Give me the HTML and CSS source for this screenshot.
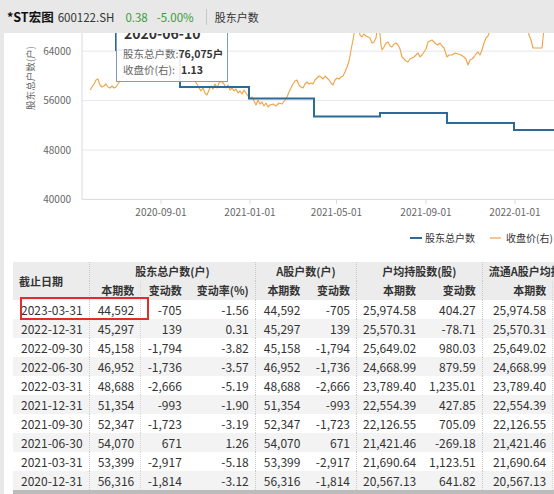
FILE: index.html
```html
<!DOCTYPE html>
<html lang="zh">
<head>
<meta charset="utf-8">
<title>股东户数</title>
<link rel="stylesheet" href="styles.css">
</head>
<body>
<div class="page">
  <header class="topbar">
    <span class="name">*ST宏图</span>
    <span class="code">600122.SH</span>
    <span class="price up">0.38</span>
    <span class="pct up">-5.00%</span>
    <span class="sep"></span>
    <span class="tab">股东户数</span>
  </header>
  <div class="main">
    <div class="strip"></div>
    <div class="content">
      <div class="chart">
        <svg class="plot" width="550" height="229" viewBox="4 33 550 229" xmlns="http://www.w3.org/2000/svg">
          <g class="grid">
            <line x1="82" y1="51.2" x2="554" y2="51.2"/>
            <line x1="82" y1="100.6" x2="554" y2="100.6"/>
            <line x1="82" y1="150" x2="554" y2="150"/>
          </g>
          <g class="axis">
            <line x1="82" y1="20" x2="82" y2="199.4"/>
            <line x1="82" y1="199.4" x2="554" y2="199.4"/>
            <line x1="161" y1="199.4" x2="161" y2="204"/>
            <line x1="250" y1="199.4" x2="250" y2="204"/>
            <line x1="336.5" y1="199.4" x2="336.5" y2="204"/>
            <line x1="426" y1="199.4" x2="426" y2="204"/>
            <line x1="515" y1="199.4" x2="515" y2="204"/>
          </g>
          <g class="ylabels">
            <text x="71" y="54.7">64000</text>
            <text x="71" y="104.1">56000</text>
            <text x="71" y="153.5">48000</text>
            <text x="71" y="202.9">40000</text>
          </g>
          <text class="ytitle" transform="translate(33.5 78) rotate(-90)">股东总户数(户)</text>
          <g class="xlabels">
            <text x="161" y="215.5">2020-09-01</text>
            <text x="250" y="215.5">2021-01-01</text>
            <text x="336.5" y="215.5">2021-05-01</text>
            <text x="426" y="215.5">2021-09-01</text>
            <text x="515" y="215.5">2022-01-01</text>
          </g>
          <path class="price-line" d="M90,90 L92,87 L94,84 L96,80 L98,79 L100,85 L102,87 L104,86 L106,84 L108,87 L110,88 L112,86 L114,88 L116,87 L118,84 L120,81 L123,76 L127,73 L131,75 L135,70 L140,72 L145,68 L150,71 L155,66 L160,69 L165,64 L170,68 L175,66 L180,71 L185,74 L190,78 L194,80 L197,84 L199,88 L201,91 L203,88 L205,93 L207,95 L209,90 L211,86 L213,89 L215,84 L217,88 L219,83 L221,81 L224,84 L226,88 L228,85 L230,90 L232,88 L234,91 L236,89 L238,93 L240,91 L242,94 L244,90 L246,93 L248,96 L250,99 L252,97 L254,101 L256,105 L258,100 L260,104 L262,102 L264,106 L266,103 L268,107 L270,105 L273,104 L276,106 L279,103 L282,104 L285,100 L287,97 L289,92 L291,88 L293,84 L295,81 L297,80 L299,85 L301,87 L303,88 L305,84 L307,82 L309,84 L311,83 L313,84 L315,80 L317,78 L319,76 L321,77 L323,79 L325,76 L327,78 L329,80 L331,83 L333,85 L335,80 L337,78 L339,79 L341,77 L343,76 L345,72 L347,67 L349,61 L350,56 L351,50 L352,45 L353,40 L354,34 L356,20 L358,25 L360,35 L362,37 L364,34 L366,36 L368,37 L370,38 L372,43 L374,42 L376,38 L377,30 L379,25 L380,34 L381,45 L382,50 L384,47 L386,43 L388,42 L390,46 L392,47 L394,44 L396,43 L398,45 L400,49 L402,57 L404,59 L406,61 L408,62 L410,59 L412,58 L414,57 L416,55 L418,53 L420,57 L422,55 L424,52 L426,49 L428,42 L430,41 L432,40 L434,42 L436,44 L438,45 L440,43 L442,46 L444,48 L445,51 L447,57 L449,55 L452,55 L455,53 L458,54 L461,55 L464,57 L466,59 L467,62 L468,65 L470,60 L472,59 L474,57 L476,54 L478,52 L480,55 L482,50 L484,43 L486,38 L488,36 L489,33 L490,25 L492,15 L526,15 L528,30 L529,35 L531,40 L532,44 L533,48 L536,48 L539,48 L542,48 L543,38 L545,20 L554,15"/>
          <path class="holder-line" d="M116,15 L116,50 L180,50 L180,87 L249,87 L249,98.5 L314,98.5 L314,116.5 L380,116.5 L380,113 L447,113 L447,123 L514,123 L514,130 L554,130"/>
          <g class="legend">
            <line class="lg-blue" x1="410" y1="238" x2="422" y2="238"/>
            <text x="425" y="241.5">股东总户数</text>
            <line class="lg-orange" x1="490" y1="238" x2="501" y2="238"/>
            <text x="506" y="241.5">收盘价(右)</text>
          </g>
        </svg>
        <div class="tooltip">
          <div class="tt-title">2020-06-10</div>
          <div class="tt-row"><span class="tt-label">股东总户数:</span><span class="tt-val">76,075户</span></div>
          <div class="tt-row"><span class="tt-label">收盘价(右):</span><span class="tt-val">1.13</span></div>
        </div>
      </div>
      <div class="table-wrap">
        <table class="data">
          <colgroup>
            <col class="c-date">
            <col class="c-w50">
            <col class="c-w46">
            <col class="c-w66">
            <col class="c-w50">
            <col class="c-w49">
            <col class="c-w64">
            <col class="c-w59">
            <col class="c-w69">
            <col class="c-last">
          </colgroup>
          <thead>
            <tr>
              <th class="date-h" rowspan="2">截止日期</th>
              <th class="grp" colspan="3">股东总户数(户)</th>
              <th class="grp" colspan="2">A股户数(户)</th>
              <th class="grp" colspan="2">户均持股数(股)</th>
              <th class="grp" colspan="2">流通A股户均持股数(股)</th>
            </tr>
            <tr>
              <th class="sub gs">本期数</th>
              <th class="sub ds">变动数</th>
              <th class="sub">变动率(%)</th>
              <th class="sub gs">本期数</th>
              <th class="sub">变动数</th>
              <th class="sub gs">本期数</th>
              <th class="sub">变动数</th>
              <th class="sub gs">本期数</th>
              <th class="sub ds"></th>
            </tr>
          </thead>
          <tbody>
            <tr><td class="date">2023-03-31</td><td class="gs">44,592</td><td class="ds">-705</td><td>-1.56</td><td class="gs">44,592</td><td>-705</td><td class="gs">25,974.58</td><td>404.27</td><td class="gs">25,974.58</td><td class="ds"></td></tr>
            <tr><td class="date">2022-12-31</td><td class="gs">45,297</td><td class="ds">139</td><td>0.31</td><td class="gs">45,297</td><td>139</td><td class="gs">25,570.31</td><td>-78.71</td><td class="gs">25,570.31</td><td class="ds"></td></tr>
            <tr><td class="date">2022-09-30</td><td class="gs">45,158</td><td class="ds">-1,794</td><td>-3.82</td><td class="gs">45,158</td><td>-1,794</td><td class="gs">25,649.02</td><td>980.03</td><td class="gs">25,649.02</td><td class="ds"></td></tr>
            <tr><td class="date">2022-06-30</td><td class="gs">46,952</td><td class="ds">-1,736</td><td>-3.57</td><td class="gs">46,952</td><td>-1,736</td><td class="gs">24,668.99</td><td>879.59</td><td class="gs">24,668.99</td><td class="ds"></td></tr>
            <tr><td class="date">2022-03-31</td><td class="gs">48,688</td><td class="ds">-2,666</td><td>-5.19</td><td class="gs">48,688</td><td>-2,666</td><td class="gs">23,789.40</td><td>1,235.01</td><td class="gs">23,789.40</td><td class="ds"><span class="peek"></span></td></tr>
            <tr><td class="date">2021-12-31</td><td class="gs">51,354</td><td class="ds">-993</td><td>-1.90</td><td class="gs">51,354</td><td>-993</td><td class="gs">22,554.39</td><td>427.85</td><td class="gs">22,554.39</td><td class="ds"></td></tr>
            <tr><td class="date">2021-09-30</td><td class="gs">52,347</td><td class="ds">-1,723</td><td>-3.19</td><td class="gs">52,347</td><td>-1,723</td><td class="gs">22,126.55</td><td>705.09</td><td class="gs">22,126.55</td><td class="ds"></td></tr>
            <tr><td class="date">2021-06-30</td><td class="gs">54,070</td><td class="ds">671</td><td>1.26</td><td class="gs">54,070</td><td>671</td><td class="gs">21,421.46</td><td>-269.18</td><td class="gs">21,421.46</td><td class="ds"></td></tr>
            <tr><td class="date">2021-03-31</td><td class="gs">53,399</td><td class="ds">-2,917</td><td>-5.18</td><td class="gs">53,399</td><td>-2,917</td><td class="gs">21,690.64</td><td>1,123.51</td><td class="gs">21,690.64</td><td class="ds"><span class="peek"></span></td></tr>
            <tr><td class="date">2020-12-31</td><td class="gs">56,316</td><td class="ds">-1,814</td><td>-3.12</td><td class="gs">56,316</td><td>-1,814</td><td class="gs">20,567.13</td><td>641.82</td><td class="gs">20,567.13</td><td class="ds"></td></tr>
          </tbody>
        </table>
        <div class="mark"></div>
      </div>
      <div class="hscroll"></div>
    </div>
  </div>
</div>
</body>
</html>
```

FILE: styles.css
```css
html, body {
  margin: 0;
  padding: 0;
}

body {
  width: 554px;
  height: 494px;
  overflow: hidden;
  background: #ffffff;
  color: #333333;
  font-family: "Noto Sans CJK SC", "Noto Sans", sans-serif;
}

.page {
  display: flex;
  flex-direction: column;
  height: 494px;
}

/* ---------- top bar ---------- */
.topbar {
  position: relative;
  z-index: 2;
  flex: none;
  height: 33px;
  display: flex;
  align-items: center;
  padding-left: 7px;
  background: #e8e8e8;
  font-size: 11.5px;
  color: #333333;
}

.name {
  font-size: 12.5px;
  font-weight: 700;
  color: #111111;
}

.code {
  margin-left: 4px;
}

.up {
  color: #3b9a3e;
}

.price {
  margin-left: 11px;
}

.pct {
  margin-left: 9px;
}

.sep {
  width: 1px;
  height: 16px;
  margin-left: 12px;
  background: #c6c6c6;
}

.tab {
  margin-left: 8px;
  font-size: 11px;
}

/* ---------- main area ---------- */
.main {
  flex: 1;
  display: flex;
  min-height: 0;
}

.strip {
  flex: none;
  width: 4px;
  background: #e8e8e8;
}

.content {
  flex: 1;
  min-width: 0;
  display: flex;
  flex-direction: column;
  overflow: hidden;
  background: #ffffff;
}

/* ---------- chart ---------- */
.chart {
  position: relative;
  flex: none;
  height: 229px;
  overflow: hidden;
}

.plot {
  display: block;
}

.grid line {
  stroke: #e6e6ee;
  stroke-width: 1;
}

.axis line {
  stroke: #d9d9e3;
  stroke-width: 1;
}

.ylabels text {
  font-size: 10px;
  fill: #666666;
  text-anchor: end;
}

.ytitle {
  font-size: 9.6px;
  fill: #666666;
  text-anchor: middle;
}

.xlabels text {
  font-size: 10px;
  fill: #666666;
  text-anchor: middle;
}

.price-line {
  fill: none;
  stroke: #f1a244;
  stroke-width: 1.1;
  stroke-linejoin: round;
}

.holder-line {
  fill: none;
  stroke: #2c6a99;
  stroke-width: 2;
}

.legend text {
  font-size: 10px;
  fill: #333333;
}

.lg-blue {
  stroke: #2c6a99;
  stroke-width: 2;
}

.lg-orange {
  stroke: #f4c592;
  stroke-width: 2;
}

/* tooltip overlay */
.tooltip {
  position: absolute;
  left: 112px;
  top: -13px;
  width: 112px;
  box-sizing: border-box;
  padding: 4px 6px 3px 6px;
  border: 1px solid #7d9dbb;
  background: rgba(255, 255, 255, 0.9);
  color: #333333;
}

.tt-title {
  margin-left: 1px;
  margin-bottom: 4px;
  font-size: 14px;
  font-weight: 700;
  line-height: 17px;
  color: #333333;
}

.tt-row {
  display: flex;
  font-size: 10.5px;
  line-height: 16px;
  white-space: nowrap;
}

.tt-label {
  width: 58px;
  color: #666666;
}

.tt-val {
  font-weight: 700;
  color: #333333;
}

/* ---------- table ---------- */
.table-wrap {
  position: relative;
  flex: none;
  margin-left: 9px;
  overflow: hidden;
}

.data {
  border-collapse: collapse;
  table-layout: fixed;
  width: 594px;
  font-size: 12px;
  color: #333333;
}

.c-date { width: 75px; }
.c-w50 { width: 50px; }
.c-w46 { width: 46px; }
.c-w66 { width: 66px; }
.c-w49 { width: 49px; }
.c-w64 { width: 64px; }
.c-w59 { width: 59px; }
.c-w69 { width: 69px; }
.c-last { width: 53px; }

.data th {
  height: 19px;
  padding: 0 6px;
  background: #ececec;
  font-size: 11px;
  font-weight: 700;
  color: #333333;
  line-height: 19px;
  white-space: nowrap;
}

.data th.date-h {
  text-align: left;
  padding-left: 6px;
  vertical-align: middle;
}

.data th.grp {
  text-align: center;
  border-left: 1px dotted #c9c9c9;
}

.data th.sub {
  text-align: right;
}

.data td {
  height: 19px;
  padding: 0 6px;
  line-height: 19px;
  text-align: right;
  white-space: nowrap;
}

.data td.date {
  text-align: left;
  padding-left: 8px;
}

.data .gs {
  border-left: 1px dotted #c9c9c9;
}

.data .ds {
  border-left: 1px dotted #d6d6d6;
}

.data tbody tr:nth-child(even) {
  background: #f3f3f3;
}

/* tiny orange marker peeking in from the next (off-screen) cell */
.data td .peek {
  display: block;
  width: 2px;
  height: 2px;
  margin-left: 6px;
  background: #f0a444;
}

/* red highlight annotation */
.mark {
  position: absolute;
  left: 7px;
  top: 35px;
  width: 129px;
  height: 23px;
  box-sizing: border-box;
  border: 2px solid #e22b2b;
}

.hscroll {
  flex: none;
  height: 4px;
  margin-left: 9px;
  background: #bcbcbc;
}
```
